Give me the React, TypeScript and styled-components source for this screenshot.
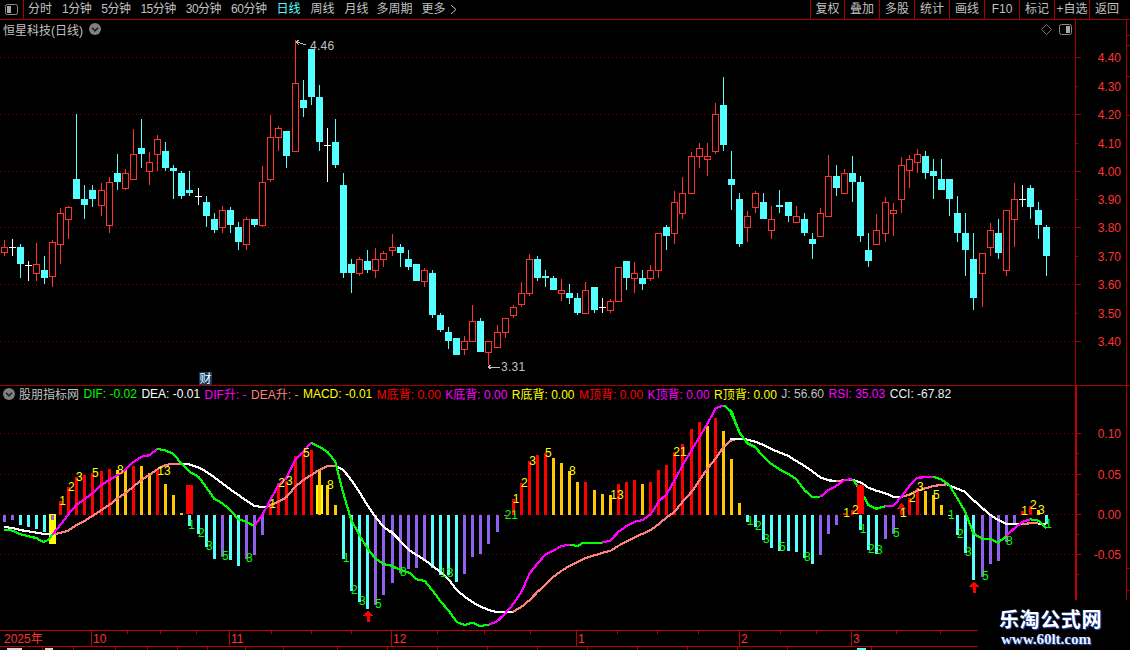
import React from "react";
import styled, { createGlobalStyle } from "styled-components";

const CYAN = "#54ffff";
const RED = "#ff3232";
const FRAME = "#a80000";
const GRID = "#7a0000";
const GREY = "#c0c0c0";
const PURE_RED = "#ff0000";
const ORANGE = "#ffc800";
const PURPLE = "#9060f0";
const GREEN = "#00ff00";
const MAGENTA = "#ff00ff";
const SALMON = "#ff8080";
const YELLOW = "#ffff00";

const Global = createGlobalStyle`
  html, body { margin: 0; padding: 0; background: #000; overflow: hidden; }
  #root { width: 1130px; height: 650px; }
`;

const Page = styled.div`
  position: relative;
  width: 1130px;
  height: 650px;
  overflow: hidden;
  background: #000;
  display: flex;
  flex-direction: column;
  font-family: "Liberation Sans", "Noto Sans CJK SC", sans-serif;
  font-size: 12px;
  color: ${GREY};
`;
const TopBar = styled.div`
  display: flex;
  align-items: stretch;
  height: 20px;
  flex: none;
  box-sizing: border-box;
  border-bottom: 1px solid ${FRAME};
`;
const PanelToggle = styled.div`
  width: 24px;
  box-sizing: border-box;
  border-right: 1px solid ${FRAME};
  display: flex;
  align-items: center;
  padding-left: 5px;
`;
const PeriodNav = styled.div`
  display: flex;
  align-items: center;
  gap: 10px;
  padding-left: 4px;
`;
const Period = styled.span<{ $active?: boolean; $tight?: boolean; $pull?: number }>`
  color: ${(p) => (p.$active ? CYAN : GREY)};
  white-space: nowrap;
  line-height: 19px;
  letter-spacing: ${(p) => (p.$tight ? "-0.5px" : "0")};
  margin-left: ${(p) => p.$pull ?? 0}px;
`;
const ActionGroup = styled.div`
  margin-left: auto;
  display: flex;
  padding-right: 6px;
`;
const ActionButton = styled.div<{ $w?: number }>`
  width: ${(p) => p.$w ?? 35}px;
  box-sizing: border-box;
  border-left: 1px solid ${FRAME};
  text-align: center;
  line-height: 19px;
  white-space: nowrap;
`;
const Row = styled.div<{ $h: number }>`
  display: flex;
  flex: none;
  height: ${(p) => p.$h}px;
  box-sizing: border-box;
  border-bottom: 1px solid ${FRAME};
`;
const LowerRow = styled(Row)`
  border-bottom: none;
`;
const Pane = styled.div`
  width: 1075px;
  flex: none;
  display: flex;
  flex-direction: column;
`;
const TitleBar = styled.div`
  height: 20px;
  flex: none;
  box-sizing: border-box;
  display: flex;
  align-items: center;
  gap: 6px;
  padding: 0 3px 2px;
  white-space: nowrap;
`;
const TitleTools = styled.div`
  margin-left: auto;
  display: flex;
  align-items: center;
  gap: 7px;
`;
const AxisPane = styled.div<{ $bw: number }>`
  width: 51px;
  flex: none;
  box-sizing: border-box;
  border-left: ${(p) => p.$bw}px solid ${(p) => (p.$bw > 1 ? "#c00000" : FRAME)};
`;
const EdgePane = styled.div<{ $bw: number }>`
  flex: 1;
  box-sizing: border-box;
  border-left: ${(p) => p.$bw}px solid ${(p) => (p.$bw > 1 ? "#c00000" : FRAME)};
`;
const Chart = styled.svg`
  display: block;
  flex: none;
`;
const LegendBar = styled.div`
  height: 15px;
  flex: none;
  display: flex;
  align-items: center;
  padding-left: 3px;
  white-space: nowrap;
`;
const LegendName = styled.span`
  margin: 0 4.5px 0 4px;
  color: ${GREY};
`;
const Metric = styled.span<{ $color: string }>`
  color: ${(p) => p.$color};
  margin-right: 4.5px;
`;
const DateAxis = styled.div`
  position: relative;
  display: flex;
  flex: none;
  height: 17px;
  box-sizing: border-box;
  border-top: 1px solid #c00000;
  border-bottom: 1px solid #c00000;
`;
const DateCell = styled.div<{ $w: number; $first?: boolean }>`
  width: ${(p) => p.$w}px;
  flex: none;
  box-sizing: border-box;
  border-left: ${(p) => (p.$first ? "none" : "1px solid #c00000")};
  padding-left: ${(p) => (p.$first ? 4 : 1)}px;
  color: ${RED};
  line-height: 16px;
`;
const MinorTick = styled.i`
  position: absolute;
  top: 0;
  width: 1px;
  height: 3px;
  background: #c00000;
`;
const TabRow = styled.div`
  display: flex;
  flex: 1;
  overflow: hidden;
`;
const TabCell = styled.div<{ $w: number; $pad?: number }>`
  width: ${(p) => p.$w}px;
  flex: none;
  box-sizing: border-box;
  border-right: 1px solid #c00000;
  padding: 1px 0 0 ${(p) => p.$pad ?? 0}px;
`;
const TabMark = styled.div<{ $w: number; $color: string }>`
  width: ${(p) => p.$w}px;
  height: 2px;
  background: ${(p) => p.$color};
`;
const Watermark = styled.div`
  position: absolute;
  right: 0;
  bottom: 0;
  width: 152px;
  height: 50px;
  background: #000;
  display: flex;
  flex-direction: column;
  align-items: flex-start;
  padding-left: 21px;
  box-sizing: border-box;
`;
const MarkTitle = styled.div`
  margin-top: 7px;
  font-family: "Noto Sans CJK SC", sans-serif;
  font-size: 20px;
  font-weight: 700;
  line-height: 24px;
  color: #fff;
  letter-spacing: 0.6px;
  text-shadow: 1px 1px 1px #2050c0;
`;
const MarkUrl = styled.div`
  margin-left: 2px;
  font-family: "Liberation Serif", serif;
  font-size: 15px;
  font-weight: 700;
  line-height: 15px;
  margin-top: 1px;
  color: #e8f0ff;
  text-shadow: 1px 1px 1px #2050c0;
`;

/* ---------- data, in pixels of the picture ---------- */
const JUMPS = [12, 24, 36, 48, 61, 73, 85, 97, 109, 121];
const col = (i: number) => 4 + 8 * i + JUMPS.filter((s) => s <= i).length;

type C = [string, number, number, number, number];
const G1: [number, C[]] = [40, [
  ["r",600,622,640,648],["w",598,622,622,648],["c",612,621,672,714],["w",663,674,674,723],["r",609,673,701,723],
  ["c",648,690,714,732],["r",600,607,710,741],["r",504,520,614,672],["r",498,502,539,597],["c",222,417,477,477],
  ["c",435,477,495,537],["c",435,450,477,501],["r",429,451,497,528],["r",411,427,557,579],["c",342,399,426,450],
  ["r",387,400,446,450],["r",267,343,419,420],["c",237,324,342,384],["r",336,367,395,435],["r",285,298,344,394],
  ["c",306,333,384,393],["c",375,384,393,477],["c",393,399,468,477],["c",393,450,459,468],["w",444,468,468,495],
  ["c",468,486,528,561],["c",519,537,570,579],["r",498,511,563,579],["c",501,510,555,579],["c",546,561,606,630],
  ["r",531,538,614,630],["c",537,537,555,561],
]];
const G2: [number, C[]] = [30, [
  ["r",408,457,587,590],["r",255,322,449,455],["r",288,295,323,363],["c",303,303,378,414],["r",30,160,365,366],
  ["c",150,210,234,261],["c",57,57,201,225],["c",165,201,336,363],["w",294,346,346,456],["c",267,336,405,414],
  ["c",429,465,729,744],["c",687,702,729,789],["r",681,688,732,738],["c",660,693,720,729],["r",654,688,723,744],
  ["r",663,670,689,711],["r",612,652,662,678],["c",642,651,669,711],["c",660,687,711,720],["c",702,702,753,753],
  ["r",714,721,755,771],["c",720,729,855,864],["c",849,855,900,906],["c",891,906,933,957],["c",924,924,975,975],
  ["r",918,934,960,975],["r",825,874,935,935],["c",864,873,966,966],["r",934,934,968,1005],["r",885,907,953,954],
  ["r",865,865,908,924],
]];
const G3: [number, C[]] = [70, [
  ["r",705,712,737,744],["r",636,670,704,711],["r",552,568,671,678],["c",558,567,624,633],["c",600,618,624,651],
  ["c",618,624,660,660],["r",627,661,671,693],["c",642,669,684,702],["c",669,684,729,735],["r",636,661,731,732],
  ["c",651,651,720,729],["w",684,712,712,729],["r",687,694,722,729],["r",592,592,695,695],["c",573,573,624,660],
  ["r",576,610,626,669],["c",600,624,642,660],["r",585,601,627,633],["r",490,490,602,624],["c",465,471,498,540],
  ["r",363,397,491,522],["r",321,370,431,447],["r",246,259,371,372],["r",219,235,260,294],["r",219,259,269,318],
  ["r",99,133,245,252],["c",21,105,225,243],["c",243,327,345,420],["c",369,387,522,531],["r",423,439,473,516],
  ["r",363,370,413,429],["c",369,396,447,447],["r",408,448,482,507],["c",360,405,411,429],["c",396,396,438,456],
]];
const G4: [number, C[]] = [130, [
  ["r",228,259,278,279],["c",249,267,309,318],["c",309,327,342,387],["r",234,250,320,321],["r",75,139,260,261],
  ["c",105,138,174,198],["r",117,130,191,192],["c",78,129,156,216],["c",138,156,318,336],["c",309,360,393,411],
  ["r",252,301,344,345],["r",201,217,311,336],["r",219,241,251,318],["r",81,106,209,249],["r",75,88,124,174],
  ["r",57,73,98,129],["c",63,78,129,147],["c",87,123,138,207],["c",87,147,180,180],["c",147,147,207,258],
  ["c",198,249,309,336],["c",249,309,360,438],["c",309,387,504,540],["r",370,370,431,531],["r",279,301,353,378],
  ["c",267,309,369,387],["r",241,241,422,438],["r",159,208,269,351],["w",165,208,208,231],["c",165,174,231,267],
  ["c",216,240,285,327],["c",285,291,378,438],
]];
const candles = [G1, G2, G3, G4].flatMap(([off, list]) =>
  list.map(([t, hi, top, bot, lo]) => ({
    t,
    hi: Math.round(off + hi / 3),
    top: Math.round(off + top / 3),
    bot: Math.round(off + bot / 3),
    lo: Math.round(off + lo / 3),
  }))
);

const PRICE_GRID = [57, 114, 171, 227, 284, 341];
const PRICE_LABELS: [string, number][] = [
  ["4.40",57],["4.30",86],["4.20",114],["4.10",143],["4.00",171],["3.90",199],
  ["3.80",227],["3.70",256],["3.60",284],["3.50",313],["3.40",341],
];
const INDEX_GRID = [433, 474, 514, 554];
const INDEX_LABELS: [string, number][] = [["0.10",433],["0.05",474],["0.00",514],["-0.05",554]];

type B = [string, number];
const B1: [number, B[]] = [410, [
  ["p",336],["p",330],["c",345],["c",352],["c",357],["c",366],["p",330],["R",273],["R",231],["R",201],
  ["R",195],["R",189],["R",183],["R",177],["o",180],["o",180],["R",168],["o",168],["o",189],["R",181],
  ["o",222],["o",255],["o",309],["c",348],["c",372],["c",411],["c",447],["p",441],["c",450],["c",468],
  ["p",447],["p",435],["p",375],["R",285],["R",219],["R",213],["R",138],["R",126],["R",120],["o",178],
  ["o",225],["o",285],["c",447],["c",543],["c",576],["c",597],["p",585],["p",555],
]];
const B2: [number, B[]] = [400, [
  ["p",549],["p",519],["p",507],["p",504],["p",480],["c",504],["c",525],["c",525],["c",546],["p",522],
  ["p",471],["p",462],["p",432],["p",396],["p",348],["R",297],["R",249],["R",183],["R",165],["R",159],
  ["o",174],["o",189],["o",213],["o",246],["R",246],["o",270],["o",282],["o",285],["R",252],["R",246],
  ["R",240],["o",252],["R",246],["R",210],["R",195],["R",156],["R",132],["R",87],["R",66],["o",78],
  ["R",54],["o",93],
]];
const B3: [number, B[]] = [400, [
  ["o",177],["o",309],["c",366],["c",381],["c",420],["c",444],["c",453],["c",453],["c",456],["c",474],
  ["c",492],["p",465],["p",402],["p",375],["R",339],["R",330],["c",390],["c",450],["c",462],["p",417],
  ["p",402],["R",330],["R",294],["R",264],["o",273],["o",285],["o",315],["c",348],["c",405],["c",459],
  ["c",540],["p",531],["p",492],["p",483],["p",426],["p",372],["R",333],["R",318],["o",330],["c",372],
]];
const BAR_COLORS: Record<string, string> = { p: PURPLE, c: CYAN, R: PURE_RED, o: ORANGE };
const bars = [B1, B2, B3].flatMap(([off, list]) =>
  list.map(([k, end]) => ({ k, end: Math.round(off + end / 3) }))
);
const THICK: { i: number; color: string; top: number; bot: number }[] = [
  { i: 6, color: YELLOW, top: 514, bot: 544 },
  { i: 23, color: PURE_RED, top: 485, bot: 514 },
  { i: 39, color: YELLOW, top: 485, bot: 514 },
];

type Seg = [string, number, number, string];
const LINES: Seg[] = [
  ["#ffffff",0,410,"13,351 37,354 60,360 85,364 109,368 133,372 165,373"],
  [SALMON,0,410,"165,373 205,362 229,345 253,333 277,318 304,300 328,285 352,265 376,250 400,230 424,210 448,195 472,178 496,165 520,161 545,161"],
  ["#ffffff",0,410,"545,161 568,163 595,172 619,185 643,202 667,220 691,238 715,255 739,272 763,287 787,292 800,290"],
  [SALMON,0,410,"800,290 835,275 859,262 886,230 910,210 934,195 958,180 982,168 1006,167"],
  ["#ffffff",0,410,"1006,167 1030,180 1054,210 1078,245 1102,285 1126,320 1150,350 1177,370 1198,388"],
  ["#ffffff",390,400,"0,390 32,425 56,450 80,465 104,480 128,498 152,517 176,538 200,570 224,590 248,607 272,620 296,630 320,636 368,636"],
  [SALMON,390,400,"368,636 395,620 419,600 443,575 467,553 491,530 515,512 539,497 563,485 587,474 614,466 638,458 662,452 686,437 710,424 734,412 758,401 782,390 806,372 830,352 854,335 878,305 905,275 929,240 953,205 977,175 1001,140 1025,120 1049,116"],
  ["#ffffff",730,400,"0,116 30,116 52,119 76,125 100,135 124,147 148,157 175,168 199,183 223,197 247,214 271,232 295,241 319,243"],
  [SALMON,730,400,"319,243 343,241 367,240"],
  ["#ffffff",730,400,"367,240 391,247 415,263 439,272 466,280 490,290 514,291"],
  [SALMON,730,400,"514,291 538,284 562,272 586,265 610,258 634,255 650,253"],
  ["#ffffff",730,400,"650,253 682,266 706,276 730,300 757,324 781,345 805,360 829,372 877,372"],
  [SALMON,730,400,"877,372 901,370 925,368"],
  ["#ffffff",730,400,"925,372 949,372"],
  [GREEN,0,410,"13,360 30,359 60,372 85,379 109,384 130,396 145,390 157,375"],
  [MAGENTA,0,410,"157,375 181,345 205,313 229,285 253,268 277,250 304,225 328,210 352,196 376,180 400,156 424,140 448,136 472,117"],
  [GREEN,0,410,"472,117 496,121 520,132 544,160 568,185 595,200 619,232 643,266 667,280 691,300 715,328 739,335 763,347"],
  [MAGENTA,0,410,"763,347 787,315 811,270 835,225 859,205 886,150 910,125 934,98"],
  [GREEN,0,410,"934,98 958,110 982,125 1006,155 1030,250 1054,330 1078,375 1102,415 1126,445 1150,462 1177,468 1198,478"],
  [GREEN,390,400,"0,497 32,510 56,517 80,538 104,543 128,572 152,605 176,632 200,666 224,675 248,668 270,678 296,674"],
  [MAGENTA,390,400,"296,674 320,665 344,642 370,612 395,575 419,520 443,490 467,463 491,451 515,438 539,434"],
  [GREEN,390,400,"539,434 563,438 580,428 636,429"],
  [MAGENTA,390,400,"636,428 660,422 686,395 710,378 734,365 758,360 782,343 806,305 830,282 854,240 878,195 905,150 929,110 953,70 977,25 1001,16"],
  [GREEN,390,400,"1001,16 1025,35 1049,100 1073,130 1097,142 1110,158"],
  [GREEN,730,400,"0,32 30,100 52,130 76,142 100,170 124,192 148,208 175,222 199,238 223,270 247,291 271,291"],
  [MAGENTA,730,400,"271,291 295,270 319,258 343,241 367,236"],
  [GREEN,730,400,"367,236 391,270 415,315 439,326 466,319"],
  [MAGENTA,730,400,"466,319 490,318 514,290 538,258 562,233 586,232 610,230"],
  [GREEN,730,400,"610,230 634,238 658,255 682,295 706,335 730,400 757,416 781,416 805,428 829,408"],
  [MAGENTA,730,400,"829,408 853,385 877,366 901,358"],
  [GREEN,730,400,"901,358 925,362 949,386"],
];
const toReal = (ox: number, oy: number, pts: string) =>
  pts.split(" ").map((p) => {
    const [x, y] = p.split(",").map(Number);
    return `${(ox + x / 3).toFixed(1)},${(oy + y / 3).toFixed(1)}`;
  }).join(" ");

type L = [string, number, number];
const UP: [number, number, L[]][] = [
  [0,410,[["1",188,273],["2",214,231],["3",238,201],["5",286,189],["8",361,180],["13",492,183],["1",818,282],["2",845,219],["3",868,213],["5",919,129],["8",991,225]]],
  [390,400,[["1",378,297],["2",403,249],["3",428,183],["5",475,159],["8",547,213],["13",681,285],["21",870,156]]],
  [730,400,[["1",350,339],["2",376,330],["1",520,339],["2",547,294],["3",571,261],["5",619,285],["1",884,333],["2",910,315],["3",934,330]]],
];
const DOWN: [number, number, L[]][] = [
  [0,410,[["1",575,345],["2",604,369],["3",628,408],["5",676,438],["8",748,444],["1",1038,444],["2",1063,540],["3",1087,573],["5",1135,582]]],
  [390,400,[["8",40,516],["13",170,519],["21",364,345],["1",1080,363]]],
  [730,400,[["2",85,378],["3",109,417],["5",157,441],["8",232,471],["1",399,387],["2",424,447],["3",448,450],["5",499,399],["1",664,345],["2",691,402],["3",715,456],["5",766,528],["8",838,423],["1",956,372]]],
];

const NAV: [string, boolean, number][] = [
  ["分时",false,0],["1分钟",true,0],["5分钟",true,0],["15分钟",true,0],["30分钟",true,0],["60分钟",true,0],
  ["日线",false,0],["周线",false,0],["月线",false,0],["多周期",false,-2],["更多",false,-1],
];
const ACTIONS = ["复权","叠加","多股","统计","画线","F10","标记","+自选","返回"];
const METRICS: [string, string][] = [
  ["DIF: -0.02",GREEN],["DEA: -0.01","#ffffff"],["DIF升: -",MAGENTA],["DEA升: -",SALMON],["MACD: -0.01",YELLOW],
  ["M底背: 0.00",PURE_RED],["K底背: 0.00",MAGENTA],["R底背: 0.00",YELLOW],["M顶背: 0.00",PURE_RED],
  ["K顶背: 0.00",MAGENTA],["R顶背: 0.00",YELLOW],["J: 56.60",GREY],["RSI: 35.03",MAGENTA],["CCI: -67.82","#f0f0f0"],
];
const DATES: [string, number][] = [["2025年",91],["10",138],["11",162],["12",185],["1",163],["2",112],["3",280]];
const MINORS = [127,160,196,271,311,351,437,484,530,617,657,698,780,816,896,940];
const TABS: { w: number; pad?: number; mark?: [number, string] }[] = [
  { w: 43, pad: 7, mark: [15, "#d8d8d8"] },
  { w: 31, pad: 2, mark: [8, "#d8d8d8"] },
  { w: 42 }, { w: 32 }, { w: 30 }, { w: 30 }, { w: 38 }, { w: 38 }, { w: 54 },
  { w: 50 }, { w: 50 }, { w: 50 }, { w: 50 }, { w: 50 }, { w: 50 }, { w: 50 }, { w: 50 }, { w: 50 },
  { w: 84, pad: 69, mark: [9, CYAN] },
];

/* ---------- drawings ---------- */
const ToggleIcon = ({ side }: { side: "left" | "right" }) => (
  <svg width="13" height="11" viewBox="0 0 13 11" style={{ display: "block" }}>
    <rect x="0.5" y="0.5" width="12" height="10" rx="2" fill="#000" stroke="#8a8a8a" />
    <rect x={side === "left" ? 2 : 7} y="2" width="4" height="7" fill="#a8a8a8" />
  </svg>
);
const DropIcon = () => (
  <svg width="12" height="12" viewBox="0 0 12 12" style={{ display: "block", flex: "none" }}>
    <circle cx="6" cy="6" r="6" fill="#808080" />
    <path d="M3 4.8 L6 7.8 L9 4.8" fill="none" stroke="#202020" strokeWidth="1.6" />
  </svg>
);
const DiamondIcon = () => (
  <svg width="11" height="11" viewBox="0 0 11 11" style={{ display: "block" }}>
    <path d="M5.5 0.5 L10.5 5.5 L5.5 10.5 L0.5 5.5 Z" fill="none" stroke="#707070" />
  </svg>
);
const MoreChevron = () => (
  <svg width="7" height="11" viewBox="0 0 7 11" style={{ display: "block", marginLeft: -6 }}>
    <path d="M1 1 L6 5.5 L1 10" fill="none" stroke="#c0c0c0" />
  </svg>
);

const Dotted = ({ y }: { y: number }) => (
  <line x1="0" x2="1075" y1={y + 0.5} y2={y + 0.5} stroke={GRID} strokeDasharray="1 3" />
);

const Candle = ({ i }: { i: number }) => {
  const d = candles[i];
  const x = col(i);
  const cx = x + 0.5;
  if (d.t === "w") {
    return (
      <g stroke="#fff">
        <line x1={cx} x2={cx} y1={d.hi} y2={d.lo} />
        <line x1={x - 3} x2={x + 4} y1={d.top + 0.5} y2={d.top + 0.5} />
      </g>
    );
  }
  if (d.t === "c") {
    return (
      <g>
        <line x1={cx} x2={cx} y1={d.hi} y2={d.lo} stroke={CYAN} />
        <rect x={x - 3} y={d.top} width="7" height={Math.max(1, d.bot - d.top)} fill={CYAN} />
      </g>
    );
  }
  return (
    <g stroke={RED} fill="none">
      <line x1={cx} x2={cx} y1={d.hi} y2={d.top} />
      <line x1={cx} x2={cx} y1={d.bot} y2={d.lo} />
      <rect x={x - 2.5} y={d.top + 0.5} width="6" height={Math.max(1, d.bot - d.top - 1)} fill="#000" />
    </g>
  );
};

const Arrow = ({ x, y, color = PURE_RED }: { x: number; y: number; color?: string }) => (
  <path d={`M${x} ${y} L${x + 5} ${y + 6} L${x + 1.5} ${y + 6} L${x + 1.5} ${y + 12} L${x - 1} ${y + 12} L${x - 1} ${y + 6} L${x - 5} ${y + 6} Z`} fill={color} />
);

const PriceChart = () => (
  <Chart width="1075" height="345" viewBox="0 40 1075 345" shapeRendering="crispEdges">
    {PRICE_GRID.map((y) => <Dotted key={y} y={y} />)}
    {candles.map((_, i) => <Candle key={i} i={i} />)}
    <g stroke={GREY} fill="none">
      <path d="M306 45 L297 42 M299 40 L296 42 L299 45" />
      <path d="M500 367 L489 367 M491 365 L488 367 L491 369" />
    </g>
    <g fill={GREY} fontSize="12" letterSpacing="0.3" shapeRendering="auto">
      <text x="310" y="50">4.46</text>
      <text x="501" y="371">3.31</text>
    </g>
    <rect x="199" y="372" width="13" height="13" fill="#103a66" />
    <text x="199.5" y="383" fill="#fff" fontSize="12">财</text>
  </Chart>
);

const IndexChart = () => (
  <Chart width="1075" height="229" viewBox="0 401 1075 229" shapeRendering="crispEdges">
    {INDEX_GRID.map((y) => <Dotted key={y} y={y} />)}
    {THICK.map((b) => (
      <rect key={b.i} x={col(b.i) - 3} y={b.top} width="7" height={b.bot - b.top} fill={b.color} />
    ))}
    {bars.map((b, i) => {
      const up = b.end < 515;
      const top = up ? b.end : 515;
      const h = up ? 515 - b.end : b.end - 515;
      return <rect key={i} x={col(i) - 1} y={top} width="3" height={h} fill={BAR_COLORS[b.k]} />;
    })}
    <rect x={col(23) - 1} y="515" width="3" height="11" fill={CYAN} />
    <rect x={col(39) - 1} y="469" width="3" height="46" fill={ORANGE} />
    <rect x={col(106) - 1} y="515" width="3" height="15" fill={CYAN} />
    <Arrow x={901.5} y={503} color="#d01010" />
    <Arrow x={368} y={610} />
    <Arrow x={974} y={581} />
    {LINES.map(([c, ox, oy, pts], i) => (
      <polyline key={i} points={toReal(ox, oy, pts)} fill="none" stroke={c} strokeWidth="2.2" />
    ))}
    <rect x={col(106) - 3} y="485" width="7" height="29" fill={PURE_RED} />
    <g fontSize="12" textAnchor="middle" shapeRendering="auto">
      {UP.flatMap(([ox, oy, list], a) =>
        list.map(([t, x, y], j) => (
          <text key={`u${a}-${j}`} x={ox + x / 3} y={oy + y / 3 + 4} fill={YELLOW}>{t}</text>
        ))
      )}
      {DOWN.flatMap(([ox, oy, list], a) =>
        list.map(([t, x, y], j) => (
          <text key={`d${a}-${j}`} x={ox + x / 3} y={oy + y / 3 + 4} fill={GREEN}>{t}</text>
        ))
      )}
    </g>
  </Chart>
);

const PriceAxis = () => (
  <Chart width="50" height="365" viewBox="1076 20 50 365" shapeRendering="crispEdges">
    {PRICE_LABELS.map(([t, y], i) => (
      <g key={t}>
        <line x1="1076" x2={i % 2 === 0 ? 1081 : 1078} y1={y + 0.5} y2={y + 0.5} stroke={FRAME} />
        <text x="1121" y={y + 5} textAnchor="end" fill={RED} fontSize="12" shapeRendering="auto">{t}</text>
      </g>
    ))}
  </Chart>
);
const IndexAxis = () => (
  <Chart width="49" height="244" viewBox="1077 386 49 244" shapeRendering="crispEdges">
    {INDEX_LABELS.map(([t, y]) => (
      <g key={t}>
        <line x1="1077" x2="1081" y1={y + 0.5} y2={y + 0.5} stroke="#c00000" />
        <line x1="1077" x2="1079" y1={y + 20.5} y2={y + 20.5} stroke="#c00000" />
        <text x="1121" y={y + 5} textAnchor="end" fill={RED} fontSize="12" shapeRendering="auto">{t}</text>
      </g>
    ))}
  </Chart>
);
const EdgeTicks = ({ ys, h, top }: { ys: number[]; h: number; top: number }) => (
  <Chart width="4" height={h} viewBox={`0 ${top} 4 ${h}`} shapeRendering="crispEdges">
    {ys.map((y) => <line key={y} x1="0" x2="4" y1={y + 0.5} y2={y + 0.5} stroke={FRAME} />)}
  </Chart>
);

export default function App() {
  return (
    <Page>
      <Global />
      <TopBar>
        <PanelToggle><ToggleIcon side="left" /></PanelToggle>
        <PeriodNav>
          {NAV.map(([n, tight, pull]) => (
            <Period key={n} $active={n === "日线"} $tight={tight} $pull={pull}>{n}</Period>
          ))}
          <MoreChevron />
        </PeriodNav>
        <ActionGroup>
          {ACTIONS.map((a, i) => <ActionButton key={a} $w={i === 0 ? 34 : 35}>{a}</ActionButton>)}
        </ActionGroup>
      </TopBar>
      <Row $h={366}>
        <Pane>
          <TitleBar>
            <span>恒星科技(日线)</span>
            <DropIcon />
            <TitleTools>
              <DiamondIcon />
              <ToggleIcon side="right" />
            </TitleTools>
          </TitleBar>
          <PriceChart />
        </Pane>
        <AxisPane $bw={1}><PriceAxis /></AxisPane>
        <EdgePane $bw={1}><EdgeTicks ys={[35, 45, 76, 115]} h={365} top={20} /></EdgePane>
      </Row>
      <LowerRow $h={244}>
        <Pane>
          <LegendBar>
            <DropIcon />
            <LegendName>股朋指标网</LegendName>
            {METRICS.map(([t, c]) => <Metric key={t} $color={c}>{t}</Metric>)}
          </LegendBar>
          <IndexChart />
        </Pane>
        <AxisPane $bw={2}><IndexAxis /></AxisPane>
        <EdgePane $bw={1}><EdgeTicks ys={[568, 590]} h={244} top={386} /></EdgePane>
      </LowerRow>
      <DateAxis>
        {DATES.map(([t, w], i) => <DateCell key={t} $w={w} $first={i === 0}>{t}</DateCell>)}
        {MINORS.map((x) => <MinorTick key={x} style={{ left: x }} />)}
      </DateAxis>
      <TabRow>
        {TABS.map((t, i) => (
          <TabCell key={i} $w={t.w} $pad={t.pad}>
            {t.mark && <TabMark $w={t.mark[0]} $color={t.mark[1]} />}
          </TabCell>
        ))}
      </TabRow>
      <Watermark>
        <MarkTitle>乐淘公式网</MarkTitle>
        <MarkUrl>www.60lt.com</MarkUrl>
      </Watermark>
    </Page>
  );
}
